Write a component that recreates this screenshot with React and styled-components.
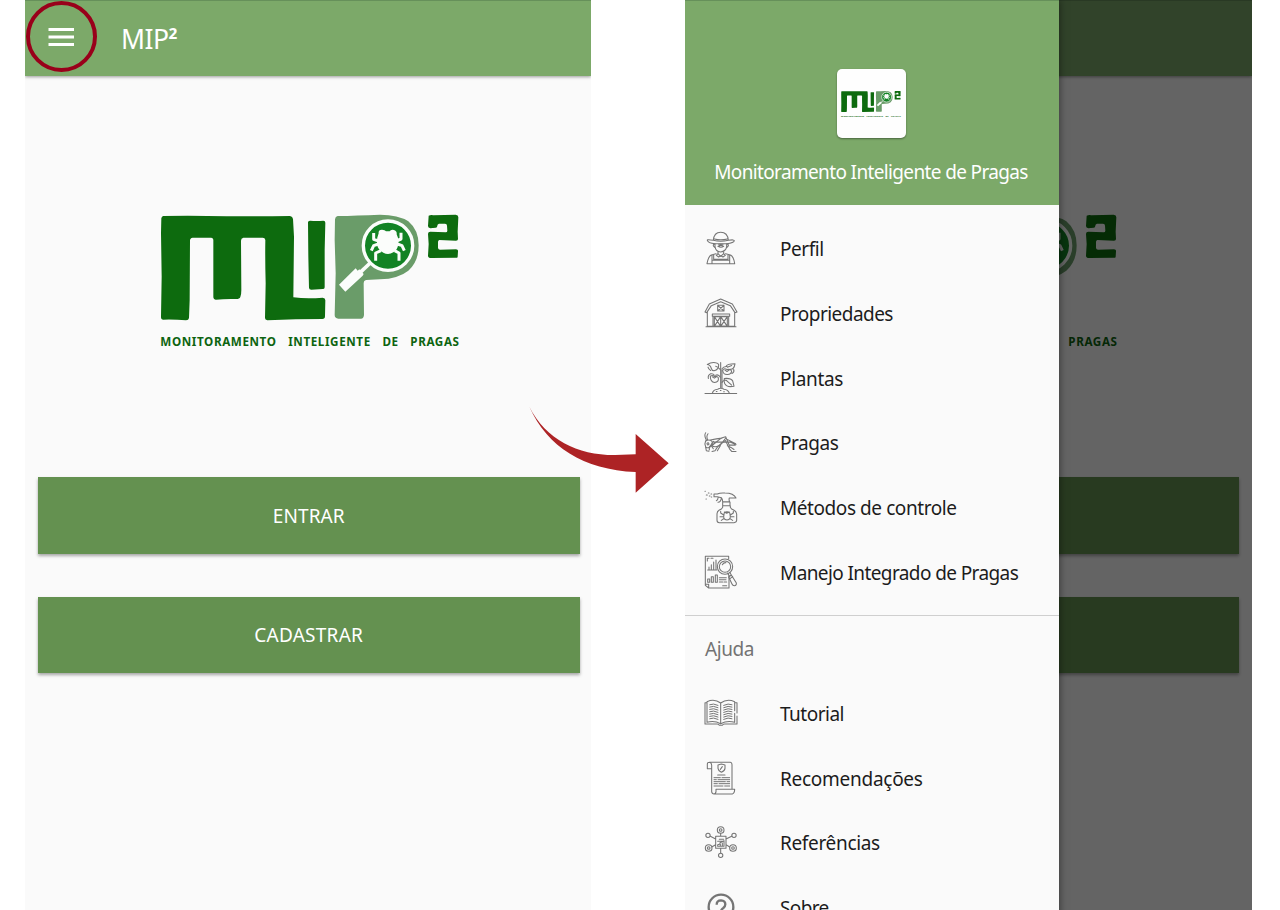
import React from "react";
import styled, { createGlobalStyle } from "styled-components";

const GlobalStyle = createGlobalStyle`
  * { box-sizing: border-box; }
  body { margin: 0; background: #fff; overflow: hidden; }
`;

const Stage = styled.main`
  position: relative;
  display: flex;
  gap: 94px;
  padding-left: 25px;
  width: 1280px;
  height: 910px;
  overflow: hidden;
  background: #fff;
  font-family: "Noto Sans", sans-serif;
`;

const Phone = styled.section`
  position: relative;
  display: flex;
  flex-direction: column;
  flex: none;
  width: ${(p) => p.$width}px;
  height: 910px;
  overflow: hidden;
  background: #fafafa;
`;

const AppBar = styled.header`
  display: flex;
  align-items: center;
  gap: 47px;
  flex: none;
  height: 76px;
  padding: 0 0 3px 23px;
  border-top: 1px solid #66905a;
  background: #7ca969;
  box-shadow: 0 1px 3px rgba(0, 0, 0, 0.38);
`;

const BarTitle = styled.h1`
  display: flex;
  margin: 0;
  padding-top: 4px;
  color: #fff;
  font-size: 26.5px;
  font-weight: 400;
  line-height: 36px;
  letter-spacing: -0.5px;
`;

const Power = styled.span`
  font-size: 25px;
  font-weight: 600;
`;

const Content = styled.div`
  display: flex;
  flex-direction: column;
  padding: 124px 11px 0 ${(p) => p.$left}px;
`;

const LogoHolder = styled.div`
  height: 160px;
  padding-left: ${(p) => p.$inset}px;
`;

const Actions = styled.div`
  display: flex;
  flex-direction: column;
  gap: 43px;
  margin-top: 117px;
`;

const ActionButton = styled.button`
  width: 542.5px;
  height: 76.5px;
  padding: 1px 0 0;
  border: 0;
  background: #649150;
  box-shadow: 0 2px 3px rgba(0, 0, 0, 0.34);
  color: #fff;
  font-family: inherit;
  font-size: 19px;
  letter-spacing: ${(p) => p.$track}px;
`;

const Scrim = styled.div`
  position: absolute;
  inset: 0;
  background: rgba(0, 0, 0, 0.6);
`;

const Drawer = styled.aside`
  position: absolute;
  top: 0;
  left: 0;
  display: flex;
  flex-direction: column;
  width: 374px;
  height: 980px;
  background: #fafafa;
  box-shadow: 0 0 8px rgba(0, 0, 0, 0.5);
`;

const DrawerHeader = styled.div`
  display: flex;
  flex-direction: column;
  align-items: center;
  flex: none;
  height: 205px;
  padding: 68px 2px 0 0;
  border-top: 1px solid #66905a;
  background: #7ca969;
`;

const Tile = styled.div`
  display: flex;
  align-items: center;
  justify-content: center;
  width: 69px;
  height: 69px;
  border-radius: 5px;
  background: #fefefe;
  box-shadow: 0 1px 2px rgba(0, 0, 0, 0.4);
`;

const DrawerTitle = styled.div`
  margin: 20px 0 0 0;
  color: #fff;
  font-size: 19px;
  line-height: 28px;
  letter-spacing: -0.64px;
  white-space: nowrap;
`;

const Menu = styled.nav`
  display: flex;
  flex-direction: column;
  padding-top: ${(p) => p.$top}px;
`;

const MenuRow = styled.a`
  display: flex;
  align-items: center;
  gap: 41px;
  height: 64.75px;
  padding-left: 18px;
  color: #1c1c1c;
  font-size: 19px;
  letter-spacing: ${(p) => p.$track}px;
  white-space: nowrap;
`;

const Divider = styled.hr`
  width: 100%;
  height: 1.5px;
  margin: 9.5px 0 0;
  border: 0;
  background: #cfcfcf;
`;

const GroupLabel = styled.div`
  margin: 19px 0 0 20px;
  color: #737373;
  font-size: 19px;
  line-height: 28px;
  letter-spacing: -0.45px;
`;

const Ring = styled.div`
  position: absolute;
  top: 1px;
  left: 26px;
  width: 71px;
  height: 71px;
  border: 4px solid #99001a;
  border-radius: 50%;
`;

const ArrowSvg = styled.svg`
  position: absolute;
  top: 390px;
  left: 510px;
`;

const LineIcon = styled.svg`
  flex: none;
  width: 36px;
  height: 36px;
  fill: none;
  stroke: #757575;
  stroke-width: 3.2;
  stroke-linecap: round;
  stroke-linejoin: round;
`;

function Logo({ width, height }) {
  return (
    <svg width={width} height={height} viewBox="0 0 960 480" role="img" aria-label="MIP²">
      <g fill="#0d6b0e">
        <path d="M40 48 Q130 46 230 49 Q330 49 420 48 Q428 49 429 57 L432 110 L430 292 Q470 297 518 293 Q526 294 526 301 L525 349 Q525 357 517 357 Q440 357 352 361 Q345 360 345 354 L347 250 Q345 180 346 120 Q345 113 338 113 L280 113 Q273 114 273 122 L274 270 Q274 284 271 291 Q269 297 258 297 Q225 296 198 299 Q190 298 190 290 L190 121 Q190 113 183 113 L128 113 Q120 114 120 122 L119 300 L117 354 Q116 361 108 361 Q75 358 39 359 Q32 358 33 350 L35 230 L33 100 L34 55 Q35 49 40 48Z" />
        <path d="M480 62 Q500 64 520 62 Q526 62 526 68 L524 150 L524 262 Q524 268 518 267 L484 269 Q477 269 477 263 L475 170 L474 67 Q474 62 480 62Z" />
        <path d="M836 47 Q843 44 850 46 L917 44 Q925 45 925 52 L923 95 L924 117 Q924 122 918 122 L868 120 Q864 121 864 126 L864 144 Q865 149 870 149 L918 148 Q925 148 924 154 L923 170 Q922 175 916 173 L844 174 Q834 174 834 167 L836 132 L834 102 Q834 95 841 95 L887 97 Q892 97 892 92 L891 77 Q891 71 885 71 L867 71 Q862 72 862 77 Q862 83 857 83 L841 85 Q834 84 834 78Z" />
      </g>
      <path
        fill="#6a9c69"
        d="M563 48 Q620 47 690 44 Q745 44 775 64 Q806 90 806 136 Q806 185 775 212 Q745 236 690 238 L648 240 Q641 241 641 249 L642 345 Q641 356 633 356 L565 356 Q554 355 554 345 L557 220 L554 120 L555 58 Q556 49 563 48Z"
      />
      <path d="M630 218L667 183" stroke="#fbfdfb" strokeWidth="11" />
      <path d="M567 254L617 205L623 212L628 208L641 222L638 227L586 275Z" fill="#fbfdfb" />
      <circle cx="714" cy="137" r="74" fill="#128324" stroke="#fbfdfb" strokeWidth="10" />
      <path
        fill="#fbfdfb"
        d="M686 100 Q684 90 696 89 Q705 89 708 94 L719 94 Q722 88 732 90 Q742 94 740 103 Q747 115 745 131 Q743 149 730 157 Q715 166 700 158 Q683 149 681 132 Q679 115 686 100Z"
      />
      <g fill="none" stroke="#fbfdfb" strokeWidth="9" strokeLinejoin="round">
        <path d="M671 99V118L686 123M753 98V117L739 123" />
        <path d="M685 132L671 137L664 152M742 132L756 137L763 152" />
        <path d="M693 152L677 159V182M734 152L747 159V182" />
      </g>
      <text
        x="31"
        y="437"
        fill="#0d6410"
        fontFamily="Noto Sans, sans-serif"
        fontSize="35"
        fontWeight="700"
        textLength="896"
        style={{ wordSpacing: "24px" }}
      >
        MONITORAMENTO INTELIGENTE DE PRAGAS
      </text>
    </svg>
  );
}

const FarmerIcon = () => (
  <LineIcon viewBox="39 33 108 108">
    <path d="M70 61Q51 57 52 61Q54 69 75 71H110Q132 69 133 62Q133 58 115 61M70 61Q72 37 92 37Q113 37 115 61Q92 67 70 61M73 57Q92 62 112 57" />
    <path d="M75 71V80Q77 95 92 96Q108 94 110 80V71M73 72Q66 75 74 82M112 72Q119 75 111 82M84 79Q92 73 101 79Q93 84 84 79M86 73H99" />
    <path d="M84 95V101L92 109L101 101V95M78 101L64 105Q55 109 51 131H134Q131 109 121 105L107 101M84 101L79 106L86 111L92 107L99 111L106 106L101 101M71 104V118H114V104M66 121H119V131M66 131V105M119 121V105" />
  </LineIcon>
);

const BarnIcon = () => (
  <LineIcon viewBox="39 228 108 108">
    <path d="M45 276L58 252L92 237L127 252L141 276L135 278L121 257L92 245L64 257L50 278ZM52 276V319H134V276M48 320H138" />
    <path d="M83 256H102V273H83ZM83 256L102 273M102 256L83 273M67 282H119V289H67ZM69 290V319M116 290V319M73 290H92V319H73ZM92 290H112V319H92ZM73 290L92 319M92 290L73 319M92 290L112 319M112 290L92 319" />
  </LineIcon>
);

const PlantIcon = () => (
  <LineIcon viewBox="39 31.5 108 108">
    <path d="M45 129H140M67 128Q70 117 83 116Q92 111 102 116Q114 117 118 128M92 113V36M96 113V58M79 123H81M91 120H93M101 124H103" />
    <path d="M91 58Q85 48 77 47M86 42Q87 57 72 61Q66 61 64 54Q61 43 52 42Q65 34 77 37Q84 38 86 42M54 50Q56 57 62 60M96 55Q101 47 111 48M108 48Q111 40 135 40Q132 58 120 56M125 45L112 50" />
    <path d="M98 59Q99 72 111 72Q123 73 125 62Q122 54 111 57Q102 52 98 59M105 59L111 63L118 58M131 57Q134 65 126 69M91 80Q86 71 77 74M61 77Q61 94 74 96Q87 95 85 82Q81 75 73 78Q67 73 61 77M67 79L73 83L80 78M55 84Q53 74 62 70Q70 69 73 74M96 96Q99 87 110 90M103 84Q122 82 128 91L132 107Q111 112 104 99Q101 91 103 84M108 89L125 104" />
  </LineIcon>
);

const CricketIcon = () => (
  <LineIcon viewBox="39 225.7 108 108">
    <path d="M50 273Q41 257 47 249M53 271Q48 259 54 252M47 273Q61 267 67 276L65 287Q55 299 47 291Q43 281 47 273M51 281Q55 276 57 283Q52 289 51 281M61 271Q80 266 96 265M110 268L137 282Q140 286 134 286H117M66 286L94 265L107 261L118 287M88 289L108 264M72 277H120L134 283M65 288Q74 293 86 289" />
    <path d="M86 288L106 272L119 298L125 305H138M79 276L65 289L70 297M71 275L58 292L58 300M47 292L49 303L57 304M84 289L75 303L66 305M91 288L82 303M112 288L126 295L132 299" />
  </LineIcon>
);

const SprayIcon = () => (
  <LineIcon viewBox="39 30 108 108">
    <path d="M72 42H82Q89 38 105 39Q131 39 138 54H118Q116 59 119 65H98Q98 58 94 53L82 50H72ZM84 51Q85 60 79 62M94 53Q93 66 84 67M98 66H120V77H98ZM98 77V82Q96 87 88 90Q81 94 81 101V121Q81 128 88 128H132Q140 127 140 121V102Q139 94 131 90Q123 87 121 82V77" />
    <path d="M102 104Q101 96 111 95Q121 96 120 104Q124 119 111 120Q98 119 102 104M103 96L110 100L118 96M101 105L92 99V94M121 105L130 99V94M100 110H90M122 110H132M102 115L94 121M119 115L128 121" />
    <path d="M45 34H46M55 39H57M49 45H52M63 42H65M58 48H60M48 57H49M64 51H65" />
  </LineIcon>
);

const ReportIcon = () => (
  <LineIcon viewBox="39 224 108 108">
    <path d="M116 235V228H46V315L56 323H117V286M46 312H56V323M52 234V242M52 234H57M63 234H69M53 269H80M57 268V260M64 268V253M71 268V245M78 268V239" />
    <circle cx="105" cy="259" r="23" />
    <circle cx="105" cy="259" r="17" />
    <path d="M97 253Q101 246 108 247M113 278L118 288M119 276L124 284M116 290L124 284L139 308Q140 315 133 316Q128 316 126 311ZM121 294L128 289M53 306V296H59V306ZM64 306V289H70V306ZM76 306V284H82V306ZM88 292H109M88 298H108M88 305H98M102 305H110M98 316H110" />
  </LineIcon>
);

const BookIcon = () => (
  <LineIcon viewBox="39 18 108 108">
    <path d="M92 39Q73 25 51 35V97Q73 91 92 101Q112 91 134 97V70M92 39Q111 25 134 35V62M92 39V101M50 38H45V102H81Q87 102 88 106H97Q99 102 104 102H141V78M135 38H141V69" />
    <path strokeWidth="3" d="M59 44Q70 39 84 46M59 51Q70 46 84 53M59 58Q70 53 84 60M59 65Q70 60 84 67M59 72Q70 67 84 74M59 79Q70 74 84 81M59 86Q70 81 84 88M101 46Q115 39 126 44M101 53Q115 46 126 51M101 60Q115 53 126 58M101 67Q115 60 126 65M101 74Q115 67 126 72M101 81Q115 74 126 79M101 88Q115 81 126 86" />
  </LineIcon>
);

const ScrollIcon = () => (
  <LineIcon viewBox="39 212 108 108">
    <path d="M65 235H52V221Q52 216 58 216H121Q126 217 126 223V296M58 216Q65 217 65 225V304Q66 311 72 311H127Q134 309 134 297H78V304Q77 311 71 311" />
    <path d="M84 224L94 221L105 224V234Q104 242 94 246Q85 242 84 234ZM91 237L97 229M83 254H105" />
    <path strokeWidth="3" d="M72 262H91M96 262H119M72 268H79M84 268H119M72 274H106M111 274H119M72 280H82M87 280H119M72 287H99M104 287H119" />
  </LineIcon>
);

const NetworkIcon = () => (
  <LineIcon viewBox="39 31 108 108">
    <path d="M77 65H108V101H77ZM92 56V65M61 65L77 73M125 65L108 73M65 97L77 90M119 97L108 90M92 102V115M88 74H101M83 80H101M83 95V90L90 88V84L102 78V95ZM91 94V89M97 94V85" />
    <circle cx="92" cy="46" r="10" />
    <circle cx="92" cy="46" r="4" />
    <circle cx="54" cy="62" r="6.5" />
    <circle cx="132" cy="62" r="6.5" />
    <circle cx="56" cy="100" r="10" />
    <circle cx="56" cy="100" r="4" />
    <circle cx="129" cy="100" r="10" />
    <circle cx="129" cy="100" r="4" />
    <circle cx="92" cy="122" r="6.5" />
  </LineIcon>
);

const HelpIcon = () => (
  <LineIcon viewBox="39 225 108 108">
    <circle cx="93" cy="276" r="37" strokeWidth="7" />
    <path strokeWidth="7" strokeLinecap="butt" d="M80 269Q80 256 93 256Q106 257 106 268Q106 274 100 279Q93 284 93 289M93 296V303" />
  </LineIcon>
);

const mainItems = [
  { label: "Perfil", Icon: FarmerIcon, track: -0.45 },
  { label: "Propriedades", Icon: BarnIcon, track: -0.55 },
  { label: "Plantas", Icon: PlantIcon, track: -0.35 },
  { label: "Pragas", Icon: CricketIcon, track: -0.45 },
  { label: "Métodos de controle", Icon: SprayIcon, track: -0.43 },
  { label: "Manejo Integrado de Pragas", Icon: ReportIcon, track: -0.6 },
];

const helpItems = [
  { label: "Tutorial", Icon: BookIcon, track: -0.5 },
  { label: "Recomendações", Icon: ScrollIcon, track: -0.27 },
  { label: "Referências", Icon: NetworkIcon, track: -0.33 },
  { label: "Sobre", Icon: HelpIcon, track: -0.65 },
];

function MenuList({ items, top }) {
  return (
    <Menu $top={top}>
      {items.map(({ label, Icon, track }) => (
        <MenuRow key={label} $track={track}>
          <Icon />
          <span>{label}</span>
        </MenuRow>
      ))}
    </Menu>
  );
}

function HomeContent({ left, inset, enterLabel, registerLabel }) {
  return (
    <Content $left={left}>
      <LogoHolder $inset={inset}>
        <Logo width={320} height={160} />
      </LogoHolder>
      <Actions>
        <ActionButton $track={0.1}>{enterLabel}</ActionButton>
        <ActionButton $track={0.25}>{registerLabel}</ActionButton>
      </Actions>
    </Content>
  );
}

export default function App() {
  return (
    <>
      <GlobalStyle />
      <Stage>
        <Phone $width={566}>
          <AppBar>
            <svg width="26" height="20" viewBox="0 0 26 20" fill="#fff" aria-label="Menu">
              <path d="M0.5 1h26v3h-26zM0.5 8.5h26v3h-26zM0.5 16h26v3h-26z" />
            </svg>
            <BarTitle>
              MIP<Power>²</Power>
            </BarTitle>
          </AppBar>
          <HomeContent left={12.5} inset={112.5} enterLabel="ENTRAR" registerLabel="CADASTRAR" />
        </Phone>
        <Phone $width={567}>
          <AppBar />
          <HomeContent left={11} inset={112} />
          <Scrim />
          <Drawer>
            <DrawerHeader>
              <Tile>
                <Logo width={64} height={32} />
              </Tile>
              <DrawerTitle>Monitoramento Inteligente de Pragas</DrawerTitle>
            </DrawerHeader>
            <MenuList items={mainItems} top={11.8} />
            <Divider />
            <GroupLabel>Ajuda</GroupLabel>
            <MenuList items={helpItems} top={18.2} />
          </Drawer>
        </Phone>
        <Ring />
        <ArrowSvg width="180" height="120" viewBox="0 0 540 360">
          <path
            fill="#ad2325"
            d="M58 50C108 150 205 196 316 195L377 193V132L476 220L377 308V246C220 239 112 170 58 50Z"
          />
        </ArrowSvg>
      </Stage>
    </>
  );
}
